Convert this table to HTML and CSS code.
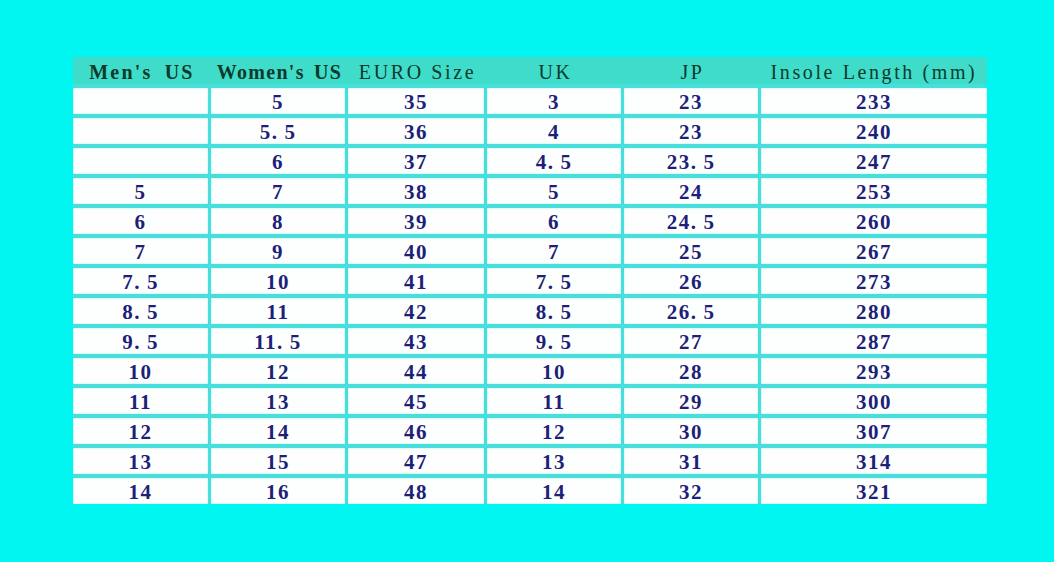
FILE: index.html
```html
<!DOCTYPE html>
<html>
<head>
<meta charset="utf-8">
<link rel="stylesheet" href="styles.css">
</head>
<body>
<div class="page">
  <div class="chart">
    <div class="hcell b">Men's US</div>
    <div class="hcell b">Women's US</div>
    <div class="hcell">EURO Size</div>
    <div class="hcell">UK</div>
    <div class="hcell">JP</div>
    <div class="hcell">Insole Length (mm)</div>

    <div class="cell"></div><div class="cell">5</div><div class="cell">35</div><div class="cell">3</div><div class="cell">23</div><div class="cell">233</div>
    <div class="cell"></div><div class="cell">5<span class="dot">.</span>5</div><div class="cell">36</div><div class="cell">4</div><div class="cell">23</div><div class="cell">240</div>
    <div class="cell"></div><div class="cell">6</div><div class="cell">37</div><div class="cell">4<span class="dot">.</span>5</div><div class="cell">23<span class="dot">.</span>5</div><div class="cell">247</div>
    <div class="cell">5</div><div class="cell">7</div><div class="cell">38</div><div class="cell">5</div><div class="cell">24</div><div class="cell">253</div>
    <div class="cell">6</div><div class="cell">8</div><div class="cell">39</div><div class="cell">6</div><div class="cell">24<span class="dot">.</span>5</div><div class="cell">260</div>
    <div class="cell">7</div><div class="cell">9</div><div class="cell">40</div><div class="cell">7</div><div class="cell">25</div><div class="cell">267</div>
    <div class="cell">7<span class="dot">.</span>5</div><div class="cell">10</div><div class="cell">41</div><div class="cell">7<span class="dot">.</span>5</div><div class="cell">26</div><div class="cell">273</div>
    <div class="cell">8<span class="dot">.</span>5</div><div class="cell">11</div><div class="cell">42</div><div class="cell">8<span class="dot">.</span>5</div><div class="cell">26<span class="dot">.</span>5</div><div class="cell">280</div>
    <div class="cell">9<span class="dot">.</span>5</div><div class="cell">11<span class="dot">.</span>5</div><div class="cell">43</div><div class="cell">9<span class="dot">.</span>5</div><div class="cell">27</div><div class="cell">287</div>
    <div class="cell">10</div><div class="cell">12</div><div class="cell">44</div><div class="cell">10</div><div class="cell">28</div><div class="cell">293</div>
    <div class="cell">11</div><div class="cell">13</div><div class="cell">45</div><div class="cell">11</div><div class="cell">29</div><div class="cell">300</div>
    <div class="cell">12</div><div class="cell">14</div><div class="cell">46</div><div class="cell">12</div><div class="cell">30</div><div class="cell">307</div>
    <div class="cell">13</div><div class="cell">15</div><div class="cell">47</div><div class="cell">13</div><div class="cell">31</div><div class="cell">314</div>
    <div class="cell">14</div><div class="cell">16</div><div class="cell">48</div><div class="cell">14</div><div class="cell">32</div><div class="cell">321</div>
  </div>
</div>
</body>
</html>
```

FILE: styles.css
```css
html, body {
  margin: 0;
  padding: 0;
  background: #00f6f0;
}
.page {
  width: 1054px;
  height: 562px;
  box-sizing: border-box;
  padding: 57px 0 0 73px;
}
.chart {
  display: grid;
  grid-template-columns: 135px 134px 136px 134px 134px 226px;
  grid-template-rows: 27px repeat(14, 26px);
  column-gap: 3px;
  row-gap: 4px;
  width: 912px;
  background: #48dedc;
}
.hcell {
  background: #40dcca;
  margin-right: -3px;
  display: flex;
  align-items: center;
  justify-content: center;
  font-family: "Liberation Serif", "DejaVu Serif", serif;
  font-size: 20px;
  letter-spacing: 2.6px;
  color: #0c3a2c;
  white-space: nowrap;
  padding-top: 3px;
}
.hcell:nth-child(6) { margin-right: 0; }
.hcell.b { font-weight: bold; letter-spacing: 1.3px; word-spacing: 3px; }
.hcell.b:first-child { letter-spacing: 2.2px; word-spacing: 5px; }
.cell {
  background: #fdfefe;
  display: flex;
  align-items: center;
  justify-content: center;
  font-family: "Liberation Serif", "DejaVu Serif", serif;
  font-weight: bold;
  font-size: 21px;
  letter-spacing: 1.5px;
  color: #1d1f78;
  padding-top: 2px;
  box-sizing: border-box;
  box-shadow: inset 0 0 2px rgba(80, 220, 220, 0.6);
}
.dot { margin-right: 6px; }
```
